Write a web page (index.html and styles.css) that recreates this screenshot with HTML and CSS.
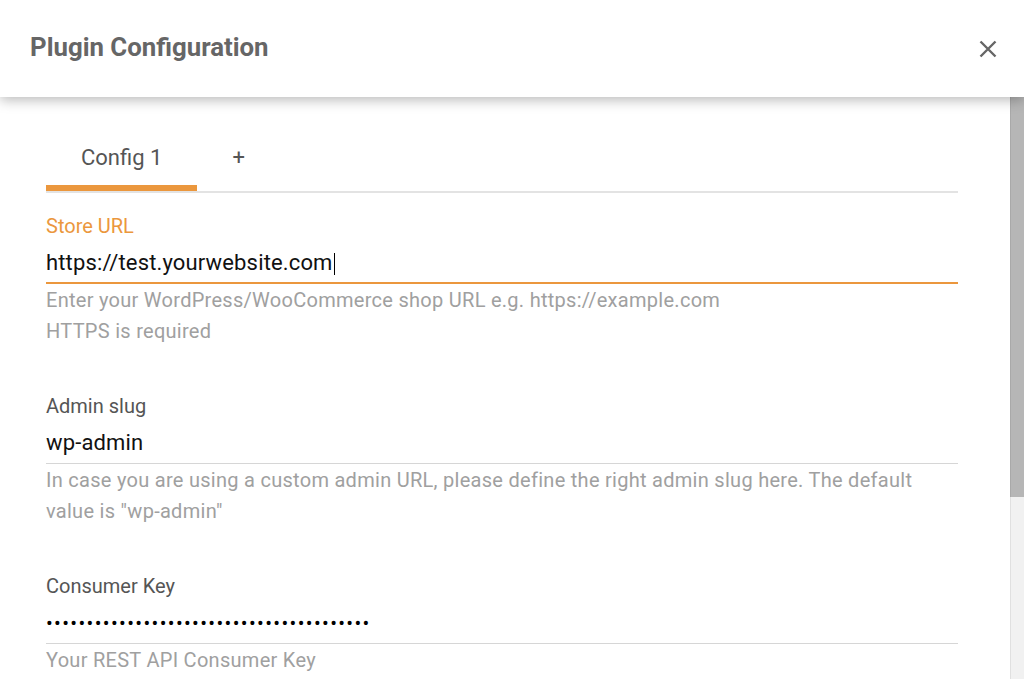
FILE: index.html
```html
<!DOCTYPE html>
<html lang="en">
<head>
<meta charset="utf-8">
<title>Plugin Configuration</title>
<link rel="stylesheet" href="styles.css">
</head>
<body>
<div class="dialog">
  <header class="dialog-header">
    <h1 class="dialog-title">Plugin Configuration</h1>
    <button class="close-btn" aria-label="Close">
      <svg width="18" height="18" viewBox="0 0 18 18"><path d="M1.5 1.5 L16.5 16.5 M16.5 1.5 L1.5 16.5" stroke="#666" stroke-width="2.4" fill="none"/></svg>
    </button>
  </header>
  <div class="dialog-main">
    <main class="dialog-body">
      <nav class="tabs">
        <div class="tab active">Config 1</div>
        <div class="tab">+</div>
      </nav>

      <div class="field focused">
        <label class="field-label">Store URL</label>
        <div class="field-input">https://test.yourwebsite.com<span class="caret"></span></div>
        <p class="field-help">Enter your WordPress/WooCommerce shop URL e.g. https://example.com<br>HTTPS is required</p>
      </div>

      <div class="field">
        <label class="field-label">Admin slug</label>
        <div class="field-input">wp-admin</div>
        <p class="field-help">In case you are using a custom admin URL, please define the right admin slug here. The default value is "wp-admin"</p>
      </div>

      <div class="field">
        <label class="field-label">Consumer Key</label>
        <div class="field-input dots">••••••••••••••••••••••••••••••••••••••••</div>
        <p class="field-help">Your REST API Consumer Key</p>
      </div>
    </main>
    <aside class="scrollbar" aria-hidden="true">
      <div class="scroll-thumb"></div>
      <div class="scroll-track"></div>
    </aside>
  </div>
</div>
</body>
</html>
```

FILE: styles.css
```css
* { box-sizing: border-box; }
html, body {
  margin: 0;
  padding: 0;
  height: 100%;
  overflow: hidden;
  background: #fff;
  font-family: Roboto, "Liberation Sans", Arial, sans-serif;
}
.dialog {
  display: flex;
  flex-direction: column;
  height: 679px;
}
.dialog-header {
  position: relative;
  z-index: 2;
  flex: 0 0 97px;
  display: flex;
  align-items: center;
  justify-content: space-between;
  padding: 0 27px 0 30px;
  background: #fff;
  box-shadow: 0 3px 12px rgba(0,0,0,0.28);
}
.dialog-title {
  margin: 0;
  font-size: 25.8px;
  font-weight: 700;
  color: #666;
  padding-bottom: 3px;
}
.close-btn {
  border: 0;
  background: none;
  padding: 0;
  width: 18px;
  height: 18px;
  display: flex;
  cursor: pointer;
}
.dialog-main {
  flex: 1 1 auto;
  display: flex;
  min-height: 0;
}
.dialog-body {
  flex: 1 1 auto;
  overflow: hidden;
  padding: 28px 52px 60px 46px;
  background: #fff;
}
.scrollbar {
  flex: 0 0 14px;
  display: flex;
  flex-direction: column;
}
.scroll-thumb {
  flex: 0 0 400px;
  background: #b6b6b6;
  border-left: 1px solid #a9a9a9;
}
.scroll-track {
  flex: 1 1 auto;
  background: #f1f1f1;
  border-left: 1px solid #e0e0e0;
}
.tabs {
  display: flex;
  border-bottom: 2px solid #e3e3e3;
}
.tab {
  padding: 21px 35px 15px;
  font-size: 22px;
  line-height: 24px;
  color: #555;
  border-bottom: 6px solid transparent;
}
.tab.active {
  border-bottom-color: #eb973d;
}
.field {
  margin-bottom: 47px;
}
.tabs + .field { margin-top: 21px; }
.field-label {
  display: block;
  font-size: 20px;
  line-height: 24px;
  color: #555;
}
.field.focused .field-label { color: #eb973d; }
.field-input {
  height: 46px;
  padding-top: 13px;
  font-size: 22px;
  line-height: 24px;
  letter-spacing: 0.15px;
  color: #111;
  border-bottom: 1px solid #d6d6d6;
  white-space: nowrap;
}
.field.focused .field-input {
  border-bottom: 2px solid #eb973d;
}
.caret {
  display: inline-block;
  width: 1.5px;
  height: 22px;
  background: #000;
  vertical-align: -5px;
  margin-left: 1px;
}
.field-input.dots {
  font-size: 20px;
  letter-spacing: 1.37px;
  line-height: 24px;
  padding-top: 13px;
  color: #000;
}
.field-help {
  margin: 0;
  padding-top: 1px;
  font-size: 20px;
  line-height: 31px;
  letter-spacing: 0.28px;
  color: #a0a0a0;
}
```
